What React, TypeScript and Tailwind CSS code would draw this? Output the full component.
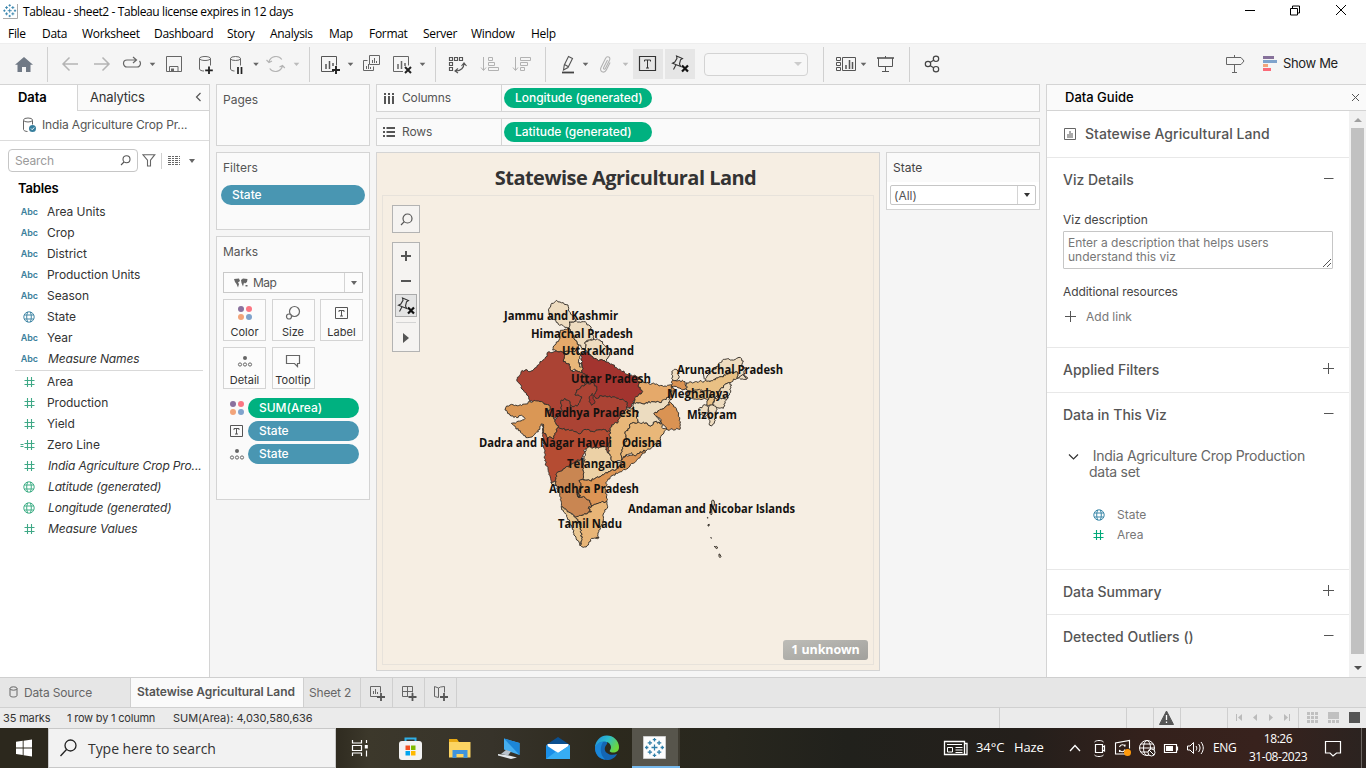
import type { ReactNode } from "react";

const UI = "font-['Inter',sans-serif]";
const WIN = "font-['Open_Sans',sans-serif]";

type ArtProps = { x: number; y: number; w: number; h: number; children?: ReactNode; className?: string };

function Art({ x, y, w, h, children, className = "" }: ArtProps) {
  return (
    <svg className={`block shrink-0 ${className}`} width={w} height={h} viewBox={`${x} ${y} ${w} ${h}`} fill="none">
      {children}
    </svg>
  );
}

function TableauMark({ cx, cy, s, color = "#2f7ea8" }: { cx: number; cy: number; s: number; color?: string }) {
  const spots: [number, number, number][] = [
    [0, 0, 2.6], [0, -6.8, 1.5], [0, 6.8, 1.5], [-6.8, 0, 1.5], [6.8, 0, 1.5],
    [4, 4, 1.9], [-4, 4, 1.9], [4, -4, 1.9], [-4, -4, 1.9],
  ];
  return (
    <g transform={`translate(${cx} ${cy}) scale(${s})`} stroke={color} strokeWidth="1.1">
      {spots.map(([x, y, r]) => (
        <path key={`${x},${y}`} d={`M${x - r} ${y}h${2 * r}M${x} ${y - r}v${2 * r}`} />
      ))}
    </g>
  );
}

function Caret({ x, y, color = "#666" }: { x: number; y: number; color?: string }) {
  return <path d={`M${x - 2.8} ${y - 1.3}h5.6l-2.8 3.2z`} fill={color} />;
}

function Globe({ color }: { color: string }) {
  return (
    <svg width="12" height="12" viewBox="0 0 12 12" fill="none" stroke={color} strokeWidth="1" className="shrink-0">
      <circle cx="6" cy="6" r="5.2" />
      <path d="M1.3 4h9.4M1.3 8h9.4M4.6 1C3.4 4 3.4 8 4.6 11M7.4 1c1.2 3 1.2 7 0 10" />
    </svg>
  );
}

function Hash({ color, calc = false }: { color: string; calc?: boolean }) {
  return (
    <svg width="16" height="12" viewBox="0 0 16 12" fill="none" stroke={color} strokeWidth="1.1" className="shrink-0">
      <path d="M5.5 4.5h10M5.5 8.5h10M8.5 1v10M12.5 1v10" />
      {calc && <path d="M1.500 5.500h3M1.500 7.500h3" />}
    </svg>
  );
}

function ColorDots() {
  return (
    <svg width="16" height="16" viewBox="0 0 16 16" className="shrink-0">
      <circle cx="4" cy="4" r="3" fill="#8a719e" />
      <circle cx="12" cy="4" r="3" fill="#fb7683" />
      <circle cx="4" cy="12" r="3" fill="#f2a47a" />
      <circle cx="12" cy="12" r="3" fill="#7fa3cc" />
    </svg>
  );
}

function LabelBox() {
  return (
    <svg width="16" height="16" viewBox="0 0 16 16" fill="none" stroke="#555" className="shrink-0">
      <path d="M1.500 2.500h12v11h-12z" />
      <path d="M5 7V5.500h5V7M7.500 5.500v5.500M6 11h3" />
    </svg>
  );
}

function DetailDots() {
  return (
    <svg width="16" height="16" viewBox="0 0 16 16" fill="none" stroke="#666" className="shrink-0">
      <circle cx="8" cy="5" r="2" fill="#666" stroke="none" />
      <circle cx="3" cy="11.500" r="1.600" />
      <circle cx="8" cy="11.500" r="1.600" />
      <circle cx="13" cy="11.500" r="1.600" />
    </svg>
  );
}

function PinX() {
  return (
    <svg width="20" height="18" viewBox="0 0 20 18" fill="none" className="shrink-0">
      <path d="M6.500 1l6 2.500-2 1.300-1 4.200 1.200 2.500L2.500 8.200l2.300-1.200 2.200-3.700zM6 9.800L3.500 14.500" stroke="#333" strokeWidth="1.100" />
      <path d="M12 10.500l6 6M18 10.500l-6 6" stroke="#111" strokeWidth="2.200" />
    </svg>
  );
}

function TitleBar() {
  return (
    <div className={`flex h-[22px] items-center bg-white text-black ${WIN}`}>
      <Art x={0} y={0} w={23} h={22}>
        <path d="M3 4h14.500v14.500H3z" fill="#fff" />
        <path d="M3 18.500h14.500V4" stroke="#aaa" />
        <TableauMark cx={9.700} cy={10.700} s={0.780} />
      </Art>
      <span className="pt-[2px] text-[12px] tracking-[-0.400px] whitespace-nowrap">Tableau - sheet2 - Tableau license expires in 12 days</span>
      <Art x={1236} y={0} w={130} h={22} className="ml-auto">
        <path d="M1245 10.500h10M1290.500 8.500h7v6.500h-7zM1292.500 8.500v-2.500h7v7h-2M1336 5l10 10M1346 5l-10 10" stroke="#000" />
      </Art>
    </div>
  );
}

const menus: [string, string][] = [
  ["File", "w-[34px]"], ["Data", "w-[40px]"], ["Worksheet", "w-[72px]"], ["Dashboard", "w-[73px]"],
  ["Story", "w-[43px]"], ["Analysis", "w-[59px]"], ["Map", "w-[40px]"], ["Format", "w-[54px]"],
  ["Server", "w-[48px]"], ["Window", "w-[60px]"], ["Help", "w-[40px]"],
];

function MenuBar() {
  return (
    <div className={`flex h-[21px] items-center bg-white pl-2 text-[12px] tracking-[-0.300px] text-black ${WIN}`}>
      {menus.map(([m, w]) => (
        <span key={m} className={`${w} pt-[3px] whitespace-nowrap`}>{m}</span>
      ))}
    </div>
  );
}

function TB({ x, w, children, className }: { x: number; w: number; children?: ReactNode; className?: string }) {
  return <Art x={x} y={44} w={w} h={40} className={className}>{children}</Art>;
}

const Sep = () => <span className="h-[35px] w-px shrink-0 bg-[#d0d0d0]" />;

function Toolbar() {
  return (
    <div className="flex h-[41px] items-center border-t border-[#eeeeee] bg-[#f5f5f5]">
      <TB x={0} w={47}>
        <path d="M24 57l-9 7.800h2.500V72h4.500v-5h4v5h4.500v-7.200H33z" fill="#707985" />
      </TB>
      <Sep />
      <TB x={48} w={70}>
        <path d="M78 64H63M69.500 57.500L63 64l6.500 6.500M94 64h15M102.500 57.500L109 64l-6.500 6.500" stroke="#b4b4b4" strokeWidth="1.500" />
      </TB>
      <TB x={118} w={44}>
        <path d="M136 60h-9a3.500 3.500 0 0 0 0 7h10a3.500 3.500 0 0 0 3.500-3.500c0-1-.4-1.800-1-2.500M133 57l3.500 3-3.500 3" stroke="#666" strokeWidth="1.200" />
        <Caret x={152.500} y={64} />
      </TB>
      <TB x={162} w={26}>
        <path d="M166.500 56.500h15v15h-15zM169.500 71.500v-5h8.500v5" stroke="#666" />
        <path d="M171 68.500h3v3h-3z" fill="#666" />
      </TB>
      <TB x={188} w={32}>
        <path d="M199.500 58.500v10.500c0 1 2 2 4.500 2M210.500 58.500v7" stroke="#666" />
        <ellipse cx="205" cy="58.500" rx="5.500" ry="2" stroke="#666" />
        <path d="M209 66.500v7.500M205.200 70.300h7.600" stroke="#222" strokeWidth="1.800" />
      </TB>
      <TB x={220} w={42}>
        <path d="M230.500 58.500v10.500c0 1 2 2 4 2M240.500 58.500v7" stroke="#666" />
        <ellipse cx="235.500" cy="58.500" rx="5" ry="2" stroke="#666" />
        <path d="M238 67v7M241.500 67v7" stroke="#222" strokeWidth="1.700" />
        <Caret x={256} y={64} />
      </TB>
      <TB x={262} w={47}>
        <path d="M269 62a7.200 7.200 0 0 1 12.800-2.500M282.500 66a7.200 7.200 0 0 1-12.800 2.500M266.500 60l2.500 2.500 3-1.500M279.500 67l3-1.500 2.300 2.500" stroke="#b4b4b4" strokeWidth="1.200" />
        <Caret x={296.500} y={64} color="#bbb" />
      </TB>
      <Sep />
      <TB x={310} w={47}>
        <path d="M334 71.500h-12.500v-15h15v9" stroke="#555" />
        <path d="M326 64v5M329.500 61v8M333 63v3" stroke="#555" strokeWidth="1.500" />
        <path d="M336 66v8M332 70h8" stroke="#222" strokeWidth="1.900" />
        <Caret x={350.500} y={64} />
      </TB>
      <TB x={357} w={30}>
        <path d="M369.500 55.500h10v9h-10zM367.500 60.500h-4v10h10v-4" stroke="#666" />
        <path d="M372.500 60v3M374.500 58v5M376.500 61v2M366.500 66v3M368.500 64v5M370.500 67v2" stroke="#666" />
      </TB>
      <TB x={387} w={48}>
        <path d="M403 71.500h-9.500v-15h15v9" stroke="#666" />
        <path d="M398 64v5M401.500 61v8M405 63v3" stroke="#666" strokeWidth="1.500" />
        <path d="M405 67l6 6M411 67l-6 6" stroke="#222" strokeWidth="2" />
        <Caret x={422.500} y={64} />
      </TB>
      <Sep />
      <TB x={436} w={37}>
        <path d="M449.500 57.500h3v3h-3zM454.500 57.500h3v3h-3zM459.500 57.500h3v3h-3zM449.500 62.500h3v3h-3zM449.500 67.500h3v3h-3zM464 63.500c0 4-3 7.500-8 7.500M461.500 66l2.500-3 2.500 3M458 68.500l-3 2.500 3 2" stroke="#555" strokeWidth="1.150" />
      </TB>
      <TB x={473} w={32}>
        <path d="M483.500 57v13M481 67.500l2.500 3 2.500-3M488.500 57.500h4v3h-4zM488.500 62.500h6v3h-6zM488.500 67.500h10v3h-10z" stroke="#b2b2b2" />
      </TB>
      <TB x={505} w={40}>
        <path d="M515.500 57v13M513 67.500l2.500 3 2.500-3M520.500 57.500h10v3h-10zM520.500 62.500h7v3h-7zM520.500 67.500h4v3h-4z" stroke="#b2b2b2" />
      </TB>
      <Sep />
      <TB x={546} w={46}>
        <path d="M568.500 56.500l4 2-4.500 9-4.500 2.500.8-5zM564.500 64.500l3.500 2" stroke="#555" strokeWidth="1.100" />
        <path d="M562 72.500h12" stroke="#444" strokeWidth="1.800" />
        <Caret x={585.500} y={64} />
      </TB>
      <TB x={592} w={41}>
        <path d="M607.500 60l-3.800 7.500c-.8 1.600 1 2.400 1.800.8l4-8c1.600-3.200-2.400-5-4-1.800l-4.500 9c-2 4 3.300 6.500 5.300 2.500l3.800-7.500" stroke="#b2b2b2" strokeWidth="1.100" />
        <Caret x={625.500} y={64} color="#bbb" />
      </TB>
      <div className="flex h-[30px] items-center overflow-hidden bg-[#e6e6e6]">
        <TB x={633} w={30}>
          <path d="M639.500 56.500h16v14h-16z" stroke="#333" strokeWidth="1.200" />
          <path d="M644.500 61.500v-1.500h6v1.500M647.500 60v8M646 68h3" stroke="#333" />
        </TB>
      </div>
      <div className="ml-[2px] flex size-[30px] items-center justify-center bg-[#e6e6e6]"><PinX /></div>
      <div className="ml-[9px] flex h-[23px] w-[104px] items-center justify-end rounded-sm border border-[#d3d3d3] bg-[#f7f7f7] pr-[5px]">
        <span className="border-x-[4px] border-t-[4px] border-x-transparent border-t-[#ccc]" />
      </div>
      <span className="w-[15px]" />
      <Sep />
      <TB x={824} w={46}>
        <path d="M836.500 57.500h4v3h-4zM836.500 62.500h4v3h-4zM836.500 67.500h4v3h-4zM842.500 57.500h13v13h-13z" stroke="#555" />
        <path d="M846 65v4M849.500 60v9M852.500 62v7" stroke="#555" strokeWidth="1.500" />
        <Caret x={863.500} y={64} />
      </TB>
      <TB x={870} w={39}>
        <path d="M877 58h17" stroke="#555" strokeWidth="1.600" />
        <path d="M878.500 58v8.500h14V58M885.500 56v2M885.500 66.500v4.500M882 71.500h7" stroke="#555" />
      </TB>
      <Sep />
      <TB x={910} w={40}>
        <path d="M930 62.500l4-2.500M930 65.500l4 2.500" stroke="#444" strokeWidth="1.200" />
        <circle cx="928" cy="64" r="2.700" stroke="#444" strokeWidth="1.200" />
        <circle cx="936" cy="58.800" r="2.700" stroke="#444" strokeWidth="1.200" />
        <circle cx="936" cy="69.200" r="2.700" stroke="#444" strokeWidth="1.200" />
      </TB>
      <TB x={1216} w={67} className="ml-auto">
        <path d="M1226.500 57.500h14.500l3 3.500-3 3.500h-14.500zM1234.500 55v2.500M1234.500 64.500v8M1232 72.500h5" stroke="#666" />
        <path d="M1263 56h11v3h-11z" fill="#86719a" />
        <path d="M1263 60h14v3h-14z" fill="#7fa3cc" />
        <path d="M1263 64h5v3h-5z" fill="#f2a47a" />
        <path d="M1263 68h8v3h-8z" fill="#fb6a78" />
      </TB>
      <span className={`w-[83px] text-[13px] tracking-[-0.350px] text-[#222] ${UI}`}>Show Me</span>
    </div>
  );
}

type Field = { icon: "abc" | "geo" | "num" | "calc" | "ggeo"; name: string; italic?: boolean };

const dims: Field[] = [
  { icon: "abc", name: "Area Units" }, { icon: "abc", name: "Crop" }, { icon: "abc", name: "District" },
  { icon: "abc", name: "Production Units" }, { icon: "abc", name: "Season" }, { icon: "geo", name: "State" },
  { icon: "abc", name: "Year" }, { icon: "abc", name: "Measure Names", italic: true },
];
const measures: Field[] = [
  { icon: "num", name: "Area" }, { icon: "num", name: "Production" }, { icon: "num", name: "Yield" },
  { icon: "calc", name: "Zero Line" }, { icon: "num", name: "India Agriculture Crop Pro...", italic: true },
  { icon: "ggeo", name: "Latitude (generated)", italic: true }, { icon: "ggeo", name: "Longitude (generated)", italic: true },
  { icon: "num", name: "Measure Values", italic: true },
];

function FieldRow({ f }: { f: Field }) {
  return (
    <div className="flex h-[21px] items-center">
      <span className="flex w-[47px] justify-end pr-[12px]">
        {f.icon === "abc" && <span className="-mr-[3px] pt-px text-[9px] font-semibold tracking-[-0.050px] text-[#3c7f9c]">Abc</span>}
        {f.icon === "geo" && <Globe color="#4287a5" />}
        {f.icon === "ggeo" && <Globe color="#3fae86" />}
        {(f.icon === "num" || f.icon === "calc") && <Hash color="#3fa886" calc={f.icon === "calc"} />}
      </span>
      <span className={f.italic ? "pl-px tracking-[-0.150px] whitespace-nowrap italic" : "whitespace-nowrap"}>{f.name}</span>
    </div>
  );
}

function DataPane() {
  return (
    <div className={`flex w-[210px] shrink-0 flex-col border-t border-r border-[#d4d4d4] bg-white ${UI}`}>
      <div className="flex h-[26px]">
        <div className="flex w-[77px] items-center pl-[18px] text-[13px] font-semibold tracking-[-0.100px] text-black">Data</div>
        <div className="flex flex-1 items-center justify-between border-b border-l border-[#d4d4d4] bg-[#fafafa] pr-[7px] pl-3 text-[13px] text-[#333]">
          <span className="tracking-[-0.180px]">Analytics</span>
          <svg width="7" height="10" viewBox="0 0 7 10" fill="none" stroke="#555" strokeWidth="1.200" className="-mt-[2px]"><path d="M5.500 1L1.500 5l4 4" /></svg>
        </div>
      </div>
      <div className="flex h-[30px] items-center border-b border-[#dcdcdc] pb-px pl-[22px] text-[12px] text-[#555]">
        <svg width="15" height="16" viewBox="0 0 15 16" fill="none" stroke="#666" className="mr-[5px]">
          <path d="M1.500 3.500v9c0 1 2 2 4 2M10.500 3.500v4" />
          <ellipse cx="6" cy="3" rx="4.500" ry="2" />
          <circle cx="10.500" cy="11.500" r="3.500" fill="#377f9e" stroke="none" />
          <path d="M9 11.500l1.200 1.200 2-2.200" stroke="#fff" />
        </svg>
        <span className="tracking-[-0.150px] whitespace-nowrap">India Agriculture Crop Pr...</span>
      </div>
      <div className="mt-2 flex h-[23px] items-center pl-2">
        <div className="flex h-[23px] w-[130px] items-center justify-between rounded-sm border border-[#c6c6c6] pr-1.5 pl-1.5 text-[12px] text-[#9a9a9a]">
          <span className="tracking-[-0.150px]">Search</span>
          <svg width="11" height="11" viewBox="0 0 11 11" fill="none" stroke="#555" strokeWidth="1.100"><circle cx="6.500" cy="4.200" r="3.500" /><path d="M4 7L1 10" /></svg>
        </div>
        <svg width="14" height="13" viewBox="0 0 14 13" fill="none" stroke="#666" strokeWidth="1.100" className="ml-1"><path d="M.8.700h12L8.500 6.200V12H5.500V6.200z" /></svg>
        <span className="ml-[5px] h-4 w-px bg-[#d0d0d0]" />
        <svg width="12" height="10" viewBox="0 0 12 10" stroke="#666" className="ml-1.5" strokeDasharray="3 1 2 1"><path d="M0 .5h12M0 2.500h12M0 4.500h12M0 6.500h12M0 8.500h12" /></svg>
        <span className="ml-[9px] border-x-[3.500px] border-t-[4px] border-x-transparent border-t-[#666]" />
      </div>
      <div className="mt-[6px] h-[23px] pl-[18px] text-[13px] leading-[20px] font-semibold tracking-[-0.150px] text-black">Tables</div>
      <div className="text-[12px] tracking-[-0.040px] text-[#333]">
        {dims.map((f) => <FieldRow key={f.name} f={f} />)}
        <div className="mt-px mr-[6px] ml-[15px] h-px bg-[#d9d9d9]" />
        <div>{measures.map((f) => <FieldRow key={f.name} f={f} />)}</div>
      </div>
    </div>
  );
}

function Pill({ children, green = false, className = "" }: { children: ReactNode; green?: boolean; className?: string }) {
  return (
    <div className={`flex h-5 items-center rounded-full pl-[11px] text-[12px] font-medium tracking-[-0.020px] text-white ${green ? "bg-[#00b180]" : "bg-[#4996b2]"} ${className}`}>
      <span className="whitespace-nowrap">{children}</span>
    </div>
  );
}

function MarkButton({ label, icon }: { label: string; icon: ReactNode }) {
  return (
    <div className="flex h-[42px] w-[43px] flex-col items-center justify-between border border-[#d4d4d4] bg-[#fcfcfc] pt-[5px] text-[#333]">
      {icon}
      <span className="text-[11px] leading-[15px] tracking-[0.010px] whitespace-nowrap">{label}</span>
    </div>
  );
}

function Cards() {
  return (
    <div className={`flex w-[154px] shrink-0 flex-col gap-[6px] text-[12px] text-[#555] ${UI}`}>
      <div className="h-[62px] border border-[#d4d4d4] bg-[#fafafa] pt-[6px] pl-[6px] leading-[18px]">Pages</div>
      <div className="h-[78px] border border-[#d4d4d4] bg-[#fafafa] pt-[6px] pl-1">
        <div className="mb-[8px] pl-[2px] leading-[18px]">Filters</div>
        <Pill className="w-[144px]">State</Pill>
      </div>
      <div className="h-[264px] border border-[#d4d4d4] bg-[#fafafa] pt-[6px] pl-[6px]">
        <div className="mb-[11px] leading-[18px]">Marks</div>
        <div className="flex h-[21px] w-[140px] items-center border border-[#c9c9c9] bg-[#fcfcfc]">
          <svg width="14" height="10" viewBox="0 0 14 10" fill="#666" className="ml-[10px]">
            <path d="M0 1l5-.5L6 3 4 4.500 5 6l-1 3.500L2.500 6 1 4zM7 2l2-1.500 4.500.5-.5 3-2 1.500-1-1L9 8.500 7.500 5zM11.500 7h2v1.500h-2z" />
          </svg>
          <span className="ml-[5px] flex-1 tracking-[-0.500px]">Map</span>
          <span className="flex h-full w-[18px] items-center justify-center border-l border-[#d4d4d4]">
            <span className="border-x-[3.500px] border-t-[4px] border-x-transparent border-t-[#666]" />
          </span>
        </div>
        <div className="mt-[6px] grid grid-cols-[43px_43px_43px] gap-x-[5.500px] gap-y-[6px]">
          <MarkButton label="Color" icon={<ColorDots />} />
          <MarkButton label="Size" icon={<svg width="16" height="16" viewBox="0 0 16 16" fill="none" stroke="#666" strokeWidth="1.200"><circle cx="9.500" cy="6.500" r="5" /><circle cx="4" cy="11.500" r="2.500" fill="#fcfcfc" /></svg>} />
          <MarkButton label="Label" icon={<LabelBox />} />
          <MarkButton label="Detail" icon={<DetailDots />} />
          <MarkButton label="Tooltip" icon={<svg width="16" height="16" viewBox="0 0 16 16" fill="none" stroke="#666" strokeWidth="1.200"><path d="M1.500 2.500h13v8h-2v3l-3-3h-8z" /></svg>} />
        </div>
        <div className="mt-[9px] flex flex-col gap-[3px]">
          <div className="flex items-center pl-[6px]"><ColorDots /><Pill green className="ml-[3px] w-[111px]">SUM(Area)</Pill></div>
          <div className="flex items-center pl-[6px]"><LabelBox /><Pill className="ml-[3px] w-[111px]">State</Pill></div>
          <div className="flex items-center pl-[6px]"><DetailDots /><Pill className="ml-[3px] w-[111px]">State</Pill></div>
        </div>
      </div>
    </div>
  );
}

type Pt = [number, number];

function noise(a: number, b: number, c: number) {
  const v = Math.sin(a * 12.989 + b * 78.233 + c * 37.719) * 43758.545;
  return v - Math.floor(v) - 0.5;
}

function roughen(points: string, amp = 1) {
  const pts = points.trim().split(/\s+/).map((p) => p.split(",").map(Number) as Pt);
  let d = "";
  pts.forEach((p, i) => {
    const q = pts[(i + 1) % pts.length];
    d += `${i ? "L" : "M"}${p[0]} ${p[1]}`;
    const len = Math.hypot(q[0] - p[0], q[1] - p[1]);
    const n = Math.floor(len / 4);
    const flip = p[0] > q[0] || (p[0] === q[0] && p[1] > q[1]);
    const [a, b] = flip ? [q, p] : [p, q];
    for (let k = 1; k < n; k++) {
      const t = (flip ? n - k : k) / n;
      const off = noise(a[0] + b[0], a[1] + b[1], Math.round(t * n)) * amp * 6;
      const x = a[0] + (b[0] - a[0]) * t - ((b[1] - a[1]) / len) * off;
      const y = a[1] + (b[1] - a[1]) * t + ((b[0] - a[0]) / len) * off;
      d += `L${x.toFixed(1)} ${y.toFixed(1)}`;
    }
  });
  return d + "Z";
}

const states: [string, string][] = [
  ["#eedcc0", "222,55 230,40 245,31 255,36 268,43 279,45 280,60 287,72 303,88 300,94 283,96 281,115 270,112 250,103 235,88 225,80"],
  ["#eedcc0", "283,96 300,94 325,95 345,108 352,125 358,148 340,150 332,155 330,178 312,165 300,150 290,130 281,115"],
  ["#e5a96a", "256,121 275,118 281,115 290,130 300,150 312,165 308,180 290,185 265,188 248,185 233,180 240,165 252,150 252,135"],
  ["#e8b779", "265,188 290,185 308,180 318,196 310,218 322,226 322,247 306,243 300,237 290,243 283,222 265,215 268,200"],
  ["#eedcc0", "332,155 358,148 375,150 400,175 408,180 400,200 392,216 375,210 355,205 340,190 330,178"],
  ["#a3342f", "318,190 335,186 355,205 375,210 392,216 410,222 430,238 465,255 483,258 490,262 490,285 503,305 483,320 470,350 455,355 455,335 430,325 400,320 380,318 362,325 355,315 365,295 355,278 330,285 335,262 322,247 322,226"],
  ["#ab4334", "222,185 248,185 265,188 268,200 265,215 283,222 290,243 306,243 322,247 335,262 330,285 305,300 300,315 320,320 310,345 285,350 285,335 270,325 257,335 258,352 262,360 240,385 220,370 225,350 205,338 165,334 155,315 138,293 138,285 125,270 138,245 150,240 165,245 185,232 195,215 210,205"],
  ["#ab4334", "240,390 262,360 258,352 257,335 270,325 285,335 285,350 310,345 320,320 300,315 305,300 330,285 355,278 365,295 355,315 362,325 380,318 400,320 430,325 455,335 455,355 450,365 435,375 430,395 410,405 405,425 380,420 355,425 330,418 318,430 300,425 275,420 250,412 243,402"],
  ["#a3342f", "352,310 343,320 342,335 350,346 359,340 354,325"],
  ["#da9755", "165,335 190,333 205,338 225,350 220,370 240,390 243,402 250,412 240,430 235,447 215,440 205,425 205,403 198,402 190,425 175,437 158,443 140,430 122,412 109,400 125,396 150,385 140,376 125,383 105,376 90,360 92,353 105,345 140,347"],
  ["#b54c33", "205,403 205,425 215,440 235,447 240,430 250,412 275,420 300,425 318,430 330,418 355,425 380,420 405,425 405,450 398,490 390,470 370,475 345,470 330,478 325,500 295,520 270,535 245,550 243,575 228,578 220,545 212,520 207,475 202,430"],
  ["#ecd1a6", "333,478 345,470 370,475 390,470 400,490 415,515 440,520 430,535 400,545 375,560 345,572 327,570 325,535 328,500"],
  ["#ecd1a6", "228,578 243,575 245,588 235,586"],
  ["#c98652", "245,550 270,535 295,520 325,505 325,535 327,570 312,572 318,585 312,600 308,620 330,622 345,632 350,648 340,655 350,665 325,675 305,682 285,668 262,650 255,620 243,585 243,575"],
  ["#dc9555", "327,570 345,572 375,560 400,545 430,535 440,520 445,500 475,495 495,485 515,480 490,505 465,528 440,545 415,555 395,575 392,605 395,633 370,640 350,648 345,632 330,622 308,620 312,600 318,585 312,572"],
  ["#e8b577", "350,648 370,640 395,633 398,650 385,672 385,690 380,705 368,738 372,743 350,745 340,765 325,772 316,766 320,745 315,705 302,682 325,675 350,665 340,655"],
  ["#eac792", "258,650 285,668 302,682 315,705 320,745 316,768 305,750 290,710 275,680"],
  ["#e8b779", "435,375 455,358 475,355 490,365 490,385 485,400 470,400 450,430 455,450 440,480 440,510 415,515 400,490 405,450 405,425 410,405 430,395"],
  ["#e8b779", "485,400 493,395 513,398 527,408 540,395 560,400 560,412 575,418 560,435 557,450 535,468 515,480 495,485 480,498 470,488 445,500 440,510 440,480 455,450 450,430 470,400"],
  ["#e5a96a", "490,262 510,278 540,283 570,288 590,285 592,305 583,318 575,330 555,338 530,335 505,342 477,338 483,320 503,305 490,285"],
  ["#ecdcc0", "477,338 505,342 530,335 555,338 583,320 583,345 560,358 537,370 550,385 560,400 540,395 527,408 513,398 493,398 485,385 490,365 475,355"],
  ["#da9353", "583,335 595,345 605,360 610,375 615,400 615,418 605,415 595,420 575,418 560,400 555,385 537,370 560,358 583,345"],
  ["#da9353", "593,268 610,272 630,275 635,293 622,300 605,290 590,290"],
  ["#da9353", "590,290 598,298 592,320 588,330 583,325 585,312"],
  ["#eedcc0", "590,265 590,245 598,238 607,240 612,250 608,268 600,272"],
  ["#eedcc0", "690,275 692,265 703,248 718,238 730,225 745,208 770,210 785,205 792,202 805,213 800,228 812,240 805,255 818,265 785,266 788,247 770,247 740,260 700,275"],
  ["#e9c084", "635,278 665,275 700,273 740,260 770,247 788,247 785,266 760,278 735,300 720,325 710,348 695,345 700,325 710,308 680,300 650,305 635,300"],
  ["#e9c084", "637,305 665,300 710,305 702,325 665,328 637,322"],
  ["#eedcc0", "735,300 760,278 770,285 763,315 755,328 735,323 725,318"],
  ["#eedcc0", "720,325 735,323 755,328 745,355 715,353 713,340"],
  ["#eedcc0", "702,350 713,345 725,355 723,375 718,400 710,408 703,405 700,375"],
  ["#eedcc0", "670,360 685,345 698,348 700,365 690,380 675,374"],
  ["#eedcc0", "312,220 320,218 322,230 314,231"],
  ["#c9bda9", "713,630 717,632 716,650 714,655 709,675 705,670 710,650"],
  ["#c9bda9", "697,682 699,683 698,685"],
  ["#c9bda9", "699,704 703,703 702,708 699,708"],
  ["#3d3b38", "707,743 709,743 709,745"],
  ["#c9bda9", "718,768 721,771 725,769 728,774 724,776"],
  ["#c9bda9", "732,792 735,793 738,800 735,803 732,799"],
];

const labels: [string, number, number, number][] = [
  ["Jammu and Kashmir", 504, 320, 114], ["Himachal Pradesh", 531, 338, 102], ["Uttarakhand", 562, 355, 72],
  ["Uttar Pradesh", 571, 383, 80], ["Madhya Pradesh", 544, 417, 95], ["Dadra and Nagar Haveli", 479, 447, 133],
  ["Odisha", 622, 447, 40], ["Telangana", 567, 468, 59], ["Andhra Pradesh", 549, 493, 90], ["Tamil Nadu", 558, 528, 64],
  ["Arunachal Pradesh", 677, 374, 106], ["Meghalaya", 667, 398, 62], ["Mizoram", 687, 419, 50],
  ["Andaman and Nicobar Islands", 628, 513, 167],
];

function IndiaMap() {
  return (
    <Art x={383} y={196} w={490} h={468}>
      <g transform="translate(475 290) scale(0.33333)" stroke="#38322c" strokeWidth="2.900" strokeLinejoin="round">
        {states.map(([fill, pts]) => <path key={pts} d={roughen(pts)} fill={fill} />)}
        <path d="M805 255l10 12M790 263l20-14M362 742l10 1M688 268l-3-18" />
        <path d="M306 611l5-2 1 5 4 3-5 4-3-4z" strokeWidth="4" />
      </g>
      <g fill="#141210" className={`text-[12px] font-bold ${WIN}`}>
        {labels.map(([t, x, y, w]) => (
          <text key={t} x={x} y={y} textLength={w} lengthAdjust="spacingAndGlyphs">{t}</text>
        ))}
      </g>
    </Art>
  );
}

function Shelf({ name, field, icon }: { name: string; field: string; icon: ReactNode }) {
  return (
    <div className="flex h-[28px] border border-[#d4d4d4] bg-[#fafafa] text-[12px] text-[#555]">
      <div className="flex w-[125px] items-center border-r border-[#d4d4d4] pl-[6px]">
        {icon}
        <span className="ml-[7px] tracking-[-0.150px]">{name}</span>
      </div>
      <div className="flex items-center pl-[2px]"><Pill green className="w-[148px]">{field}</Pill></div>
    </div>
  );
}

function MapControls() {
  return (
    <div className="absolute top-[9px] left-[9px] flex flex-col gap-[9px]">
      <div className="flex size-[28px] items-center justify-center border border-[#b3b3b3] bg-[#f5f3f1]">
        <svg width="13" height="13" viewBox="0 0 13 13" fill="none" stroke="#555" strokeWidth="1.200"><circle cx="7.500" cy="5.500" r="4.500" /><path d="M4.300 8.700L1 12" /></svg>
      </div>
      <div className="flex h-[110px] w-[28px] flex-col items-center border border-[#b3b3b3] bg-[#f5f3f1]">
        <svg width="26" height="51" viewBox="0 0 26 51" stroke="#555" strokeWidth="2" className="shrink-0"><path d="M8 13h10M13 8v10M8 38h10" /></svg>
        <div className="flex h-[23px] w-[22px] shrink-0 items-center justify-center border border-[#aaa] bg-[#e4e4e4]"><PinX /></div>
        <span className="mt-[5px] h-px w-5 shrink-0 bg-[#d4d4d4]" />
        <span className="mt-[10px] border-y-[5px] border-l-[6px] border-y-transparent border-l-[#555]" />
      </div>
    </div>
  );
}

function Main() {
  return (
    <div className={`flex w-[664px] shrink-0 flex-col ${UI}`}>
      <Shelf name="Columns" field="Longitude (generated)" icon={<svg width="12" height="13" viewBox="0 0 12 13" stroke="#555" strokeWidth="2"><path d="M2 1v2M2 4v8M6 1v2M6 4v8M10 1v2M10 4v8" /></svg>} />
      <div className="h-[6px]" />
      <Shelf name="Rows" field="Latitude (generated)" icon={<svg width="12" height="12" viewBox="0 0 12 12" stroke="#555" strokeWidth="1.800"><path d="M0 2h2M3.500 2H12M0 6h2M3.500 6H12M0 10h2M3.500 10H12" /></svg>} />
      <div className="mt-[6px] flex items-start justify-between">
        <div className="h-[519px] w-[504px] border border-[#d4d4d4] bg-[#f6eee3] px-[5px]">
          <div className={`flex h-[42px] items-center justify-center pt-[8px] pr-[5px] text-[20px] font-bold tracking-[-0.530px] text-[#333] ${WIN}`}>
            <span className="whitespace-nowrap">Statewise Agricultural Land</span>
          </div>
          <div className="relative h-[470px] w-[492px] border border-[#e7e2db]">
            <IndiaMap />
            <MapControls />
            <div className={`absolute right-[5px] bottom-[4px] flex h-[20px] w-[85px] items-center justify-center rounded-[3px] bg-gradient-to-br from-[#bdbcb7] to-[#a1a09c] text-[12.500px] font-bold tracking-[-0.120px] text-white ${WIN}`}>1 unknown</div>
          </div>
        </div>
        <div className="h-[58px] w-[154px] border border-[#d4d4d4] bg-white text-[12px] text-[#444]">
          <div className="h-[29px] bg-[#fafafa] pt-[6px] pl-[6px] leading-[18px]">State</div>
          <div className="mx-[3px] mt-[3px] flex h-[20px] items-center rounded-[2px] border border-[#c6c6c6] pl-[3px] text-[#555]">
            <span className="flex-1 pt-px text-[12px]">(All)</span>
            <span className="flex h-full w-[18px] items-center justify-center border-l border-[#d4d4d4]">
              <span className="border-x-[3.500px] border-t-[4px] border-x-transparent border-t-[#333]" />
            </span>
          </div>
        </div>
      </div>
    </div>
  );
}

function Section({ title, open }: { title: string; open: boolean }) {
  return (
    <div className="flex h-[44px] shrink-0 items-center justify-between pr-[14px] pb-[3px] pl-[16px] text-[14px] font-medium text-[#555]">
      <span className="pt-px whitespace-nowrap">{title}</span>
      <svg width="13" height="13" viewBox="0 0 13 13" stroke="#555"><path d={open ? "M2 6.500h9.500" : "M1 6.500h11M6.500 1v11"} /></svg>
    </div>
  );
}

function Guide() {
  return (
    <div className={`ml-[6px] flex flex-1 flex-col border-t border-l border-[#d4d4d4] bg-white ${UI}`}>
      <div className="flex h-[26px] shrink-0 items-center justify-between border-b border-[#d4d4d4] bg-[#fafafa] pr-[6px] pl-[18px]">
        <span className="text-[13px] font-medium tracking-[0px] text-black">Data Guide</span>
        <svg width="9" height="9" viewBox="0 0 9 9" stroke="#555" className="-mt-px"><path d="M1 1l7 7M8 1L1 8" /></svg>
      </div>
      <div className="flex min-h-0 flex-1">
        <div className="flex w-[302px] flex-col text-[#555]">
          <div className="flex h-[47px] shrink-0 items-center border-b border-[#e8e8e8] pb-px pl-[17px] text-[14px] font-medium">
            <svg width="12" height="12" viewBox="0 0 12 12" className="mr-[9px]"><path d="M.5.500h11v11H.5z" fill="none" stroke="#666" /><path d="M3 6h2V3h2v2h2v5H3z" fill="#aaa" /></svg>
            <span className="tracking-[0.040px] whitespace-nowrap">Statewise Agricultural Land</span>
          </div>
          <Section title="Viz Details" open />
          <div className="px-4 text-[12px]">
            <div className="mt-[8px] h-[20px] leading-[20px] text-[#444]">Viz description</div>
            <div className="mt-[1px] flex h-[38px] w-[270px] items-end rounded-[1px] border border-[#c6c6c6] pl-1 leading-[14px] text-[#777]">
              <span className="flex-1 self-start pt-[4px]">Enter a description that helps users<br />understand this viz</span>
              <svg width="10" height="10" viewBox="0 0 10 10" stroke="#555"><path d="M1 9l8-8M5 9l4-4" /></svg>
            </div>
            <div className="mt-[13px] h-[20px] leading-[20px] tracking-[-0.080px] text-[#444]">Additional resources</div>
            <div className="mt-[5px] flex h-[20px] items-center text-[#777]">
              <svg width="12" height="12" viewBox="0 0 12 12" stroke="#555" className="mr-[9px] ml-[2px]"><path d="M0 5.500h11M5.500 0v11" /></svg>
              Add link
            </div>
          </div>
          <div className="mt-[20px] border-t border-[#e8e8e8]"><Section title="Applied Filters" open={false} /></div>
          <div className="border-t border-[#e8e8e8]"><Section title="Data in This Viz" open /></div>
          <div className="flex pt-[11px] pl-[21px] text-[14px] leading-[16px] text-[#666]">
            <svg width="12" height="8" viewBox="0 0 12 8" fill="none" stroke="#333" strokeWidth="1.200" className="mt-[5px] mr-[9px]"><path d="M1 1.500L5.500 6 10 1.500" /></svg>
            <span className="tracking-[-0.260px]">&nbsp;India Agriculture Crop Production<br />data set</span>
          </div>
          <div className="mt-[25px] pl-[46px] text-[12px] text-[#777]">
            <div className="flex h-[20px] items-center"><Globe color="#3a87a8" /><span className="ml-[12px]">State</span></div>
            <div className="flex h-[20px] items-center"><span className="-ml-[5px] flex"><Hash color="#00a878" /></span><span className="ml-[13px]">Area</span></div>
          </div>
          <div className="mt-[24px] border-t border-[#e8e8e8]"><Section title="Data Summary" open={false} /></div>
          <div className="border-t border-[#e8e8e8]"><Section title="Detected Outliers ()" open /></div>
        </div>
        <div className="flex w-[17px] flex-col items-center bg-[#f1f1f1]">
          <span className="mt-[7px] border-x-[4px] border-b-[4px] border-x-transparent border-b-[#a0a0a0]" />
          <span className="mt-[6px] h-[526px] w-[13px] bg-[#c1c1c1]" />
          <span className="mt-[12px] border-x-[4px] border-t-[4px] border-x-transparent border-t-[#505050]" />
        </div>
      </div>
    </div>
  );
}

function SheetTabs() {
  return (
    <div className={`flex h-[30px] border-t border-[#cfcfcf] bg-[#e6e6e6] text-[12px] text-[#666] ${UI}`}>
      <div className="flex w-[131px] items-center border-r border-[#cfcfcf] pl-[9px]">
        <svg width="9" height="12" viewBox="0 0 9 12" fill="none" stroke="#666" className="mr-[6px] -mt-[2px]"><ellipse cx="4.500" cy="2.500" rx="3.500" ry="1.700" /><path d="M1 2.500v7c0 2 7 2 7 0v-7" /></svg>
        <span className="tracking-[-0.150px]">Data Source</span>
      </div>
      <div className="flex w-[173px] items-center border-r border-[#cfcfcf] bg-[#fafafa] pb-px pl-[6px] font-semibold tracking-[-0.060px] whitespace-nowrap text-[#555]">Statewise Agricultural Land</div>
      <div className="flex w-[57px] items-center border-r border-[#cfcfcf] pl-[5px] tracking-[-0.200px] whitespace-nowrap">Sheet 2</div>
      <Art x={361} y={678} w={96} h={29}>
        <path d="M392.500 678v29M424.500 678v29M456.500 678v29" stroke="#cfcfcf" />
        <path d="M377 696.500h-6.500v-10h10v6M402.500 686.500h10v6M407.500 686.500v10M402.500 691.500h10M402.500 686.500v10h6M434.500 686.500l4 1.500 2-1 4-.5v6M434.500 686.500v10l4 1M438.500 688v9.500" stroke="#666" />
        <path d="M373.500 691v3M375.500 689v5M377.500 692v2" stroke="#666" />
        <path d="M381 693v8M377 697h8M412.500 693v8M408.500 697h8M444 693v8M440 697h8" stroke="#555" strokeWidth="1.800" />
      </Art>
    </div>
  );
}

function StatusBar() {
  return (
    <div className={`flex h-[21px] items-center border-t border-[#d0d0d0] bg-[#ebebeb] pl-[3px] text-[11px] text-[#333] ${UI}`}>
      <span className="w-[64px] tracking-[-0.150px] whitespace-nowrap">35 marks</span>
      <span className="w-[106px] tracking-[-0.200px] whitespace-nowrap">1 row by 1 column</span>
      <span className="tracking-[-0.030px] whitespace-nowrap">SUM(Area): 4,030,580,636</span>
      <Art x={996} y={708} w={370} h={20} className="ml-auto">
        <path d="M999.500 708v20M1126.500 708v20M1153.500 708v20M1180.500 708v20M1227.500 708v20M1298.500 708v20" stroke="#cfcfcf" />
        <path d="M1166.500 711l7 13.500h-14z" fill="#555" stroke="#555" strokeLinejoin="round" />
        <path d="M1166.500 715v5M1166.500 721.500v1.500" stroke="#fff" strokeWidth="1.300" />
        <path d="M1242 714v7l-4-3.500zM1257 714v7l-4-3.500zM1269 714v7l4-3.500zM1284 714v7l4-3.500z" fill="#bbb" />
        <path d="M1236.500 714v7M1289.500 714v7" stroke="#bbb" />
        <path d="M1307 712h3v3h-3zM1311 712h3v3h-3zM1315 712h3v3h-3zM1307 716h3v3h-3zM1311 716h3v3h-3zM1315 716h3v3h-3zM1307 720h3v3h-3zM1311 720h3v3h-3zM1315 720h3v3h-3zM1328 712h11v7h-11zM1328 720h3v3h-3zM1332 720h3v3h-3zM1336 720h3v3h-3z" fill="#c0c0c0" />
        <path d="M1349 712h11v11h-11z" fill="#555" />
      </Art>
    </div>
  );
}

function TaskBar() {
  return (
    <div className={`flex h-[40px] items-center bg-[linear-gradient(90deg,#2c281d_0%,#2c281d_24%,#3c382b_27%,#37332a_36%,#2c291d_45%,#28271e_53%,#21211c_62%,#241f1b_75%,#34211c_84%,#38221d_92%,#2b2320_100%)] text-white ${WIN}`}>
      <Art x={0} y={728} w={48} h={40}>
        <path d="M16 741.800l6.700-1v6.700H16zM23.600 740.700l8.400-1.200v8H23.600zM16 748.400h6.700v6.700l-6.700-1zM23.600 748.400H32v8l-8.400-1.200z" fill="#fff" />
      </Art>
      <div className="flex h-[40px] w-[288px] items-center border border-[#c8c8c8] bg-[#f2f2f2] text-[#333]">
        <Art x={49} y={729} w={39} h={38}>
          <circle cx="70.500" cy="745.500" r="5.500" stroke="#222" strokeWidth="1.300" />
          <path d="M66.500 749.500l-6 6.500" stroke="#222" strokeWidth="1.300" />
        </Art>
        <span className="text-[14px] tracking-[-0.050px] whitespace-nowrap">Type here to search</span>
      </div>
      <Art x={336} y={728} w={48} h={40}>
        <path d="M352.500 740v3h9v-3M352.500 756v-3h9v3M352.500 745.500h9v5h-9zM366.500 740v3M366.500 750.500v6" stroke="#fff" strokeWidth="1.200" />
        <path d="M364.800 745h3v3.500h-3z" fill="#fff" />
      </Art>
      <Art x={384} y={728} w={53} h={40}>
        <path d="M405.500 742v-3.500h10v3.500" stroke="#2fb0e8" strokeWidth="2" />
        <rect x="399" y="741" width="23" height="19" rx="3" fill="#f3f3f3" />
        <path d="M405.500 745.500h4.500v4.500h-4.500z" fill="#f25022" /><path d="M411 745.500h4.500v4.500H411z" fill="#7fba00" />
        <path d="M405.500 751h4.500v4.500h-4.500z" fill="#00a4ef" /><path d="M411 751h4.500v4.500H411z" fill="#ffb900" />
      </Art>
      <Art x={437} y={728} w={47} h={40}>
        <path d="M449 739h8l2 3h11v15h-21z" fill="#e8a914" />
        <path d="M449 742h21.500v15.500H449z" fill="#fcd462" />
        <path d="M452.500 758v-8h15v8h-4v-4h-7v4z" fill="#3f94dc" />
      </Art>
      <Art x={484} y={728} w={50} h={40}>
        <path d="M504 738.500l15.500 4.500v12l-15.500-5.500z" fill="#45aef0" />
        <path d="M504 738.500l15.500 4.500v12z" fill="#1c86d8" />
        <path d="M506 750l5 1.500-3 4-7-1.500z" fill="#b9c3cc" />
        <path d="M498 754l11 1.500 8 2-6 1.500-13-3.500z" fill="#e3e8ec" />
      </Art>
      <Art x={534} y={728} w={48} h={40}>
        <path d="M546 745l12-8 12 8v13.500h-24z" fill="#0a4f8f" />
        <path d="M547.500 744h21v10h-21z" fill="#fff" />
        <path d="M546 745l12 8 12-8v14h-24z" fill="#1a8fe8" />
        <path d="M546 759l10-7.500 2 1.500 12-8v14z" fill="#37adf3" />
      </Art>
      <Art x={582} y={728} w={50} h={40}>
        <defs>
          <linearGradient id="edgeTop" x1="0" y1="0" x2="1" y2="0.500"><stop offset="0" stopColor="#2389d8" /><stop offset="0.500" stopColor="#2bbbd0" /><stop offset="1" stopColor="#6cd83c" /></linearGradient>
        </defs>
        <path d="M595 748c0-5 4-8 8-8 3 0 5 2 4 4-3 3-3 7 0 9 3 2.500 7 2 10 1-2 4-6 6-10 6-7 0-12-5-12-12z" fill="#1466b4" />
        <path d="M603 742c-3 5-3.500 12 2 17.500C598 758.500 595 753 595 748c1-4 4-6.500 8-6z" fill="#1a86d8" />
        <path d="M595 748a12 12 0 0 1 24-1c.3 5-5 6.500-8.500 5-2-1 .5-2 .5-4.500 0-4-3.500-6-7-6-5 0-8.500 3.500-9 6.500z" fill="url(#edgeTop)" />
      </Art>
      <div className="flex h-[40px] w-[46px] items-center justify-center border-b-2 border-[#76b9ed] bg-[#57554c]">
        <Art x={0} y={0} w={24} h={24} className="mt-[2px]">
          <path d="M.5.500h22v22H.5z" fill="#fdfdfd" stroke="#ccc" />
          <TableauMark cx={11.500} cy={11.500} s={1.150} />
        </Art>
      </div>
      <span className="h-[40px] w-[2px] border-b-2 border-[#76b9ed] bg-[#3f3c32]" />
      <Art x={940} y={728} w={36} h={40} className="ml-auto">
        <path d="M944.500 741.500h20v13h-20zM964.500 743.500h2.500v11h-3" stroke="#fff" strokeWidth="1.300" />
        <path d="M947 744.500h15M955.500 747.500h7M955.500 750h7M955.500 752.500h7" stroke="#fff" />
        <path d="M947.500 747.500h5v4.500h-5z" stroke="#fff" />
      </Art>
      <span className="w-[38px] text-[13px] tracking-[-0.100px] whitespace-nowrap">34°C</span>
      <span className="w-[49px] text-[13px] tracking-[-0.100px] whitespace-nowrap">Haze</span>
      <Art x={1063} y={728} w={150} h={40}>
        <path d="M1070 751l5-5.500 5 5.500" stroke="#fff" strokeWidth="1.300" />
        <path d="M1095.500 744.500h7v8h-7zM1102.500 747l2-1v5l-2-1" stroke="#fff" strokeWidth="1.200" />
        <path d="M1094.500 742c1.500-2 7.500-2 9 0M1094.500 755c1.500 2 7.500 2 9 0" stroke="#fff" />
        <path d="M1125 754h-9.500v-11l14-2.500v8M1119.500 747c1-3 4.500-3 5.500-.5v-2M1125 749.500c-1 3-4.500 3-5.500.5v2" stroke="#fff" strokeWidth="1.100" />
        <circle cx="1127.500" cy="752.500" r="3.500" fill="#ff9a0c" />
        <circle cx="1147" cy="748" r="7.500" stroke="#fff" /><ellipse cx="1147" cy="748" rx="3.500" ry="7.500" stroke="#fff" />
        <path d="M1139.500 748h15M1141 744h12M1141 752h8" stroke="#fff" />
        <circle cx="1151.500" cy="752.500" r="3.500" fill="#2e211c" stroke="#fff" /><path d="M1149 750l5 5" stroke="#fff" />
        <path d="M1164.500 744.500h12v8h-12zM1177.500 746.500v4" stroke="#fff" strokeWidth="1.200" /><path d="M1166 746h7v5h-7z" fill="#fff" />
        <path d="M1187.500 746h2.500l3.500-3.500v11L1190 750h-2.500zM1196 746c1 1.500 1 3 0 4.500M1198.500 744c2 2.500 2 5.500 0 8M1201 742c3 4 3 8 0 12" stroke="#fff" />
      </Art>
      <span className="w-[35px] text-[12px] tracking-[-0.350px]">ENG</span>
      <div className="w-[60px] text-center text-[12px] leading-[18px] tracking-[-0.450px] whitespace-nowrap">
        <div>18:26</div>
        <div>31-08-2023</div>
      </div>
      <Art x={1308} y={728} w={58} h={40}>
        <path d="M1325.500 741.500h15v11.500h-4l-3.500 3-3-3h-4.500z" stroke="#fff" strokeWidth="1.200" />
        <path d="M1361.500 728v40" stroke="#6b6562" />
      </Art>
    </div>
  );
}

export default function App() {
  return (
    <div className="flex h-[768px] w-[1366px] flex-col overflow-hidden bg-[#f5f5f5]">
      <TitleBar />
      <MenuBar />
      <Toolbar />
      <div className="flex h-[593px] shrink-0">
        <DataPane />
        <div className="flex gap-[6px] pl-[6px]">
          <Cards />
          <Main />
        </div>
        <Guide />
      </div>
      <SheetTabs />
      <StatusBar />
      <TaskBar />
    </div>
  );
}
